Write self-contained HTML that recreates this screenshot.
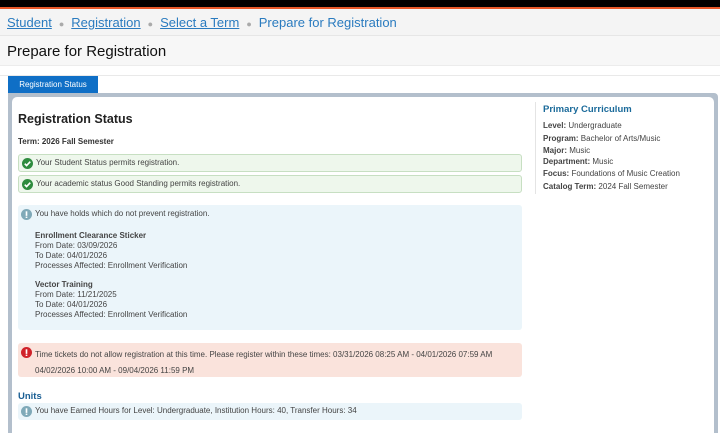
<!DOCTYPE html>
<html><head><meta charset="utf-8"><style>
*{margin:0;padding:0;box-sizing:border-box}
body{width:720px;height:426px;overflow:hidden;background:#fff;font-family:"Liberation Sans",Arial,sans-serif;color:#333;position:relative}
.abs{position:absolute}
.top{left:0;top:0;width:720px;height:7px;background:#000}
.orange{left:0;top:7px;width:720px;height:2px;background:#e8592a}
.crumb{left:0;top:9px;width:720px;height:27px;background:#f4f4f4;border-bottom:1px solid #e6e6e6;font-size:13px;line-height:27px;padding-left:7px;color:#2a7bbf}
.crumb a{color:#2a7bbf;text-decoration:underline}
.crumb .d{color:#aaa;margin:0 7px;font-size:9px}
.title{left:0;top:36px;width:720px;height:30px;background:#f7f7f7;font-size:15px;line-height:31px;padding-left:7px;color:#111;border-bottom:1px solid #ececec}
.tabline{left:0;top:75px;width:720px;height:1px;background:#e9e9e9}
.tab{left:8px;top:76px;width:90px;height:17px;background:#0f6fc6;color:#fff;font-size:8px;line-height:18px;text-align:center}
.panel{left:8px;top:93px;width:710px;height:340px;background:#b3bfcc;border-radius:0 4px 0 0}
.inner{left:12px;top:97px;width:702px;height:340px;background:#fff;border-radius:5px 5px 0 0}
.h{font-size:12.5px;font-weight:bold;color:#222}
.s{font-size:8px}
.b{font-weight:bold}
.box{left:18px;width:504px;border-radius:3px;font-size:8px;color:#444}
.g{background:#eef7ec;border:1px solid #c7dfc2;height:18px;line-height:16px;padding-left:17px}
.i{background:#ebf5fa}
.r{background:#fae3dc}
.ic{position:absolute;left:3px;top:3px}
.rt{font-size:8px;color:#444;line-height:11.5px}
</style></head><body>
<div class="abs top"></div><div class="abs orange"></div>
<div class="abs crumb"><a>Student</a><span class="d">●</span><a>Registration</a><span class="d">●</span><a>Select a Term</a><span class="d">●</span>Prepare for Registration</div>
<div class="abs title">Prepare for Registration</div>
<div class="abs tabline"></div>
<div class="abs tab">Registration Status</div>
<div class="abs panel"></div>
<div class="abs inner"></div>

<div class="abs h" style="left:18px;top:112px">Registration Status</div>
<div class="abs s b" style="left:18px;top:137px;color:#333">Term: 2026 Fall Semester</div>

<div class="abs box g" style="top:154px"><svg class="ic" width="11" height="11" viewBox="0 0 12 12"><circle cx="6" cy="6" r="6" fill="#2e8b3e"/><path d="M3 6.2l2 2 4-4.2" stroke="#fff" stroke-width="1.8" fill="none"/></svg>Your Student Status permits registration.</div>
<div class="abs box g" style="top:175px"><svg class="ic" width="11" height="11" viewBox="0 0 12 12"><circle cx="6" cy="6" r="6" fill="#2e8b3e"/><path d="M3 6.2l2 2 4-4.2" stroke="#fff" stroke-width="1.8" fill="none"/></svg>Your academic status Good Standing permits registration.</div>

<div class="abs box i" style="top:205px;height:125px">
<svg class="ic" width="11" height="11" viewBox="0 0 12 12" style="top:4px"><circle cx="6" cy="6" r="6" fill="#7fa9b8"/><rect x="5.1" y="2.5" width="1.8" height="5" fill="#fff"/><rect x="5.1" y="8.3" width="1.8" height="1.5" fill="#fff"/></svg>
<div style="position:absolute;left:17px;top:4px">You have holds which do not prevent registration.</div>
<div style="position:absolute;left:17px;top:26px;line-height:10px"><b>Enrollment Clearance Sticker</b><br>From Date: 03/09/2026<br>To Date: 04/01/2026<br>Processes Affected: Enrollment Verification</div>
<div style="position:absolute;left:17px;top:75px;line-height:10px"><b>Vector Training</b><br>From Date: 11/21/2025<br>To Date: 04/01/2026<br>Processes Affected: Enrollment Verification</div>
</div>

<div class="abs box r" style="top:343px;height:34px">
<svg class="ic" width="11" height="11" viewBox="0 0 12 12" style="top:4px"><circle cx="6" cy="6" r="6" fill="#d0222a"/><rect x="5.1" y="2.5" width="1.8" height="5" fill="#fff"/><rect x="5.1" y="8.3" width="1.8" height="1.5" fill="#fff"/></svg>
<div style="position:absolute;left:17px;top:4px;line-height:16px">Time tickets do not allow registration at this time. Please register within these times: 03/31/2026 08:25 AM - 04/01/2026 07:59 AM<br>04/02/2026 10:00 AM - 09/04/2026 11:59 PM</div>
</div>

<div class="abs b" style="left:18px;top:391px;font-size:9.5px;color:#1a5f94">Units</div>
<div class="abs box i" style="top:403px;height:17px;line-height:16px;padding-left:17px"><svg class="ic" width="11" height="11" viewBox="0 0 12 12"><circle cx="6" cy="6" r="6" fill="#7fa9b8"/><rect x="5.1" y="2.5" width="1.8" height="5" fill="#fff"/><rect x="5.1" y="8.3" width="1.8" height="1.5" fill="#fff"/></svg>You have Earned Hours for Level: Undergraduate, Institution Hours: 40, Transfer Hours: 34</div>

<div class="abs" style="left:535px;top:102px;width:1px;height:92px;background:#e4e4e4"></div>
<div class="abs b" style="left:543px;top:104px;font-size:9.5px;color:#1a6a9a">Primary Curriculum</div>
<div class="abs rt" style="left:543px;top:120px"><b>Level:</b> Undergraduate</div>
<div class="abs rt" style="left:543px;top:133px"><b>Program:</b> Bachelor of Arts/Music<br><b>Major:</b> Music<br><b>Department:</b> Music</div>
<div class="abs rt" style="left:543px;top:168px"><b>Focus:</b> Foundations of Music Creation</div>
<div class="abs rt" style="left:543px;top:181px"><b>Catalog Term:</b> 2024 Fall Semester</div>
</body></html>
